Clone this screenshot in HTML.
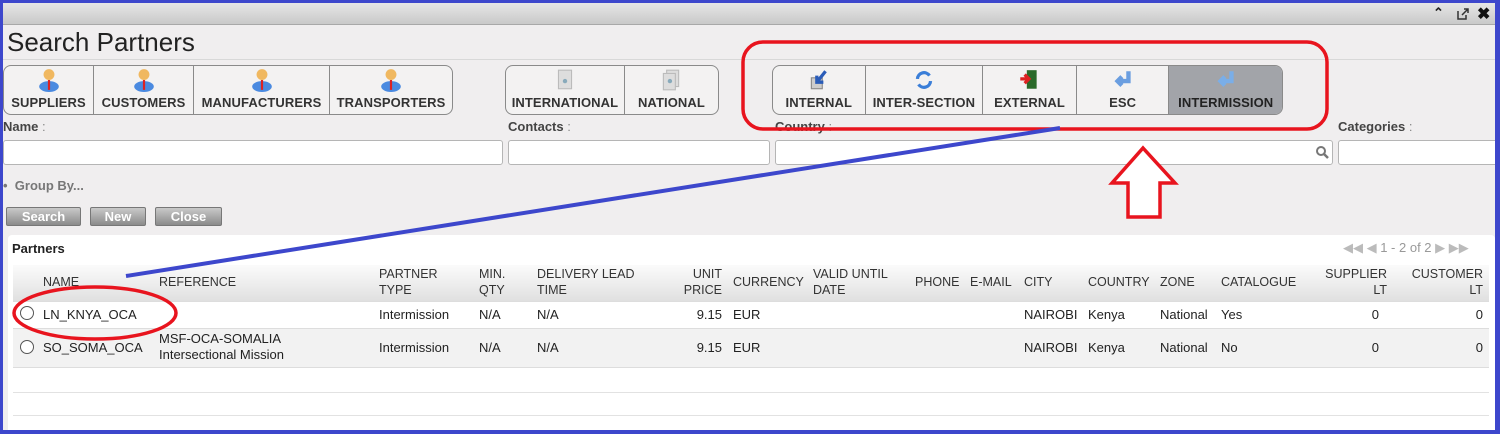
<!DOCTYPE html>
<html><head><meta charset="utf-8"><style>
*{margin:0;padding:0;box-sizing:border-box}
body{width:1500px;height:434px;overflow:hidden;background:#3d47cc;font-family:"Liberation Sans",Arial,sans-serif;position:relative}
.a{position:absolute}
#main{position:absolute;left:3px;top:3px;width:1492px;height:427px;background:#f0eeef;overflow:hidden}
.grp{position:absolute;top:62px;height:50px;border:1px solid #8a8a8a;border-radius:8px;background:#f3f2f2;display:flex;overflow:hidden}
.grp div{border-right:1px solid #8a8a8a;display:flex;flex-direction:column;align-items:center;justify-content:flex-end;padding-bottom:4px;font-weight:bold;font-size:13px;color:#333;letter-spacing:0.1px}
.grp div:last-child{border-right:none}
.ic{width:22px;height:24px;margin-bottom:3px}
.lbl{position:absolute;top:116px;font-size:13px;font-weight:bold;color:#444}
.lbl span{font-weight:normal;color:#888}
.inp{position:absolute;top:137px;height:25px;background:#fff;border:1px solid #b5b5b5;border-radius:3px}
.btn{position:absolute;top:204px;height:19px;border:1px solid #777;border-radius:2px;background:linear-gradient(#c9c9c9,#8b8b8b);color:#fff;font-weight:bold;font-size:13px;text-align:center;line-height:17px}
.t{position:absolute;font-size:13px;color:#222;white-space:nowrap;line-height:16px}
.h{position:absolute;font-size:12.5px;color:#333;white-space:nowrap;line-height:16px}
.r{text-align:right}
</style></head><body>
<div id="main">
 <div class="a" style="left:0;top:0;width:1492px;height:22px;background:linear-gradient(#e6e6e6,#c9c9c9);border-bottom:1px solid #a8a8a8"></div>
 <div class="a" style="left:1430px;top:2px;font-size:13px;font-weight:bold;color:#222">&#8963;</div>
 <svg class="a" style="left:1454px;top:5px" width="12" height="12"><path d="M1 3v8h8V7" fill="none" stroke="#333" stroke-width="1.5"/><path d="M5 7L11 1M7 1h4v4" fill="none" stroke="#333" stroke-width="1.5"/></svg>
 <div class="a" style="left:1474px;top:1px;font-size:16px;font-weight:bold;color:#111">&#10006;</div>
 <div class="a" style="left:4px;top:24px;font-size:26px;color:#222">Search Partners</div>
 <div class="a" style="left:0;top:56px;width:1492px;height:1px;background:#d8d8d8"></div>

 <div class="grp" style="left:0;width:450px">
  <div style="width:90px"><svg class="ic" viewBox="0 0 20 22"><circle cx="10" cy="6" r="5" fill="#f0b860"/><ellipse cx="10" cy="17" rx="9" ry="5" fill="#4a8ae0"/><path d="M10 11v9" stroke="#d22" stroke-width="2"/></svg>SUPPLIERS</div>
  <div style="width:100px"><svg class="ic" viewBox="0 0 20 22"><circle cx="10" cy="6" r="5" fill="#f0b860"/><ellipse cx="10" cy="17" rx="9" ry="5" fill="#4a8ae0"/><path d="M10 11v9" stroke="#d22" stroke-width="2"/></svg>CUSTOMERS</div>
  <div style="width:136px"><svg class="ic" viewBox="0 0 20 22"><circle cx="10" cy="6" r="5" fill="#f0b860"/><ellipse cx="10" cy="17" rx="9" ry="5" fill="#4a8ae0"/><path d="M10 11v9" stroke="#d22" stroke-width="2"/></svg>MANUFACTURERS</div>
  <div style="width:122px"><svg class="ic" viewBox="0 0 20 22"><circle cx="10" cy="6" r="5" fill="#f0b860"/><ellipse cx="10" cy="17" rx="9" ry="5" fill="#4a8ae0"/><path d="M10 11v9" stroke="#d22" stroke-width="2"/></svg>TRANSPORTERS</div>
 </div>
 <div class="grp" style="left:502px;width:214px">
  <div style="width:120px"><svg class="ic" viewBox="0 0 20 22"><rect x="4" y="2" width="12" height="17" fill="#ddd" stroke="#bbb"/><circle cx="10" cy="12" r="2" fill="#8ab"/></svg>INTERNATIONAL</div>
  <div style="width:94px"><svg class="ic" viewBox="0 0 20 22"><rect x="6" y="2" width="11" height="15" fill="#ddd" stroke="#bbb"/><rect x="3" y="5" width="11" height="15" fill="#ddd" stroke="#bbb"/><circle cx="9" cy="12" r="2" fill="#8ab"/></svg>NATIONAL</div>
 </div>
 <div class="grp" style="left:769px;width:511px">
  <div style="width:93px"><svg class="ic" viewBox="0 0 20 22"><rect x="3" y="9" width="10" height="10" fill="#ccc" stroke="#888"/><path d="M16 3L8 13M8 7v6h6" stroke="#2a5cb8" stroke-width="3" fill="none"/></svg>INTERNAL</div>
  <div style="width:118px"><svg class="ic" viewBox="0 0 20 22"><path d="M4 10a6 6 0 0 1 11-3M16 12a6 6 0 0 1-11 3" stroke="#3a7ed8" stroke-width="3" fill="none"/></svg>INTER-SECTION</div>
  <div style="width:94px"><svg class="ic" viewBox="0 0 20 22"><rect x="8" y="2" width="9" height="17" fill="#2a6a2a"/><path d="M2 10h7M6 6l4 4-4 4" stroke="#d22" stroke-width="3" fill="none"/></svg>EXTERNAL</div>
  <div style="width:93px"><svg class="ic" viewBox="0 0 20 22"><path d="M15 3v9H6M9 8l-4 4 4 4" stroke="#6a9ee0" stroke-width="4" fill="none"/></svg>ESC</div>
  <div style="width:113px;background:#a2a4a9;color:#222"><svg class="ic" viewBox="0 0 20 22"><path d="M15 3v9H6M9 8l-4 4 4 4" stroke="#7aaee8" stroke-width="4" fill="none"/></svg>INTERMISSION</div>
 </div>

 <div class="lbl" style="left:0">Name <span>:</span></div>
 <div class="lbl" style="left:505px">Contacts <span>:</span></div>
 <div class="lbl" style="left:772px">Country <span>:</span></div>
 <div class="lbl" style="left:1335px">Categories <span>:</span></div>
 <div class="inp" style="left:0;width:500px"></div>
 <div class="inp" style="left:505px;width:262px"></div>
 <div class="inp" style="left:772px;width:558px"></div>
 <svg class="a" style="left:1313px;top:143px" width="13" height="13"><circle cx="5" cy="5" r="4" fill="none" stroke="#777" stroke-width="2"/><path d="M8 8l4 4" stroke="#777" stroke-width="2.5"/></svg>
 <div class="inp" style="left:1335px;width:170px"></div>
 <div class="a" style="left:0;top:175px;font-size:13px;font-weight:bold;color:#777">&#8226;&nbsp; Group By...</div>
 <div class="btn" style="left:3px;width:75px">Search</div>
 <div class="btn" style="left:87px;width:56px">New</div>
 <div class="btn" style="left:152px;width:67px">Close</div>

 <div class="a" style="left:5px;top:232px;width:1487px;height:200px;background:#fff;border-radius:4px"></div>
 <div class="a" style="left:9px;top:238px;font-size:13px;font-weight:bold;color:#222">Partners</div>
 <div class="a" style="left:1340px;top:237px;font-size:13px;color:#bbb">&#9664;&#9664; &#9664; <span style="color:#999">1 - 2 of 2</span> &#9654; &#9654;&#9654;</div>
 <div class="a" style="left:10px;top:262px;width:1476px;height:36px;background:linear-gradient(#fbfbfb,#e0e0e0)"></div>
 <div class="a" style="left:10px;top:298px;width:1476px;height:1px;background:#ddd"></div>
 <div class="a" style="left:10px;top:325px;width:1476px;height:40px;background:#f2f2f2;border-top:1px solid #ddd;border-bottom:1px solid #ddd"></div>
 <div class="a" style="left:10px;top:389px;width:1476px;height:1px;background:#e2e2e2"></div>
 <div class="a" style="left:10px;top:412px;width:1476px;height:1px;background:#e2e2e2"></div>

 <div class="h" style="left:40px;top:271px">NAME</div>
 <div class="h" style="left:156px;top:271px">REFERENCE</div>
 <div class="h" style="left:376px;top:263px">PARTNER<br>TYPE</div>
 <div class="h" style="left:476px;top:263px">MIN.<br>QTY</div>
 <div class="h" style="left:534px;top:263px">DELIVERY LEAD<br>TIME</div>
 <div class="h r" style="left:660px;width:59px;top:263px">UNIT<br>PRICE</div>
 <div class="h" style="left:730px;top:271px">CURRENCY</div>
 <div class="h" style="left:810px;top:263px">VALID UNTIL<br>DATE</div>
 <div class="h" style="left:912px;top:271px">PHONE</div>
 <div class="h" style="left:967px;top:271px">E-MAIL</div>
 <div class="h" style="left:1021px;top:271px">CITY</div>
 <div class="h" style="left:1085px;top:271px">COUNTRY</div>
 <div class="h" style="left:1157px;top:271px">ZONE</div>
 <div class="h" style="left:1218px;top:271px">CATALOGUE</div>
 <div class="h r" style="left:1300px;width:84px;top:263px">SUPPLIER<br>LT</div>
 <div class="h r" style="left:1390px;width:90px;top:263px">CUSTOMER<br>LT</div>

 <div class="a" style="left:17px;top:303px;width:14px;height:14px;border:1px solid #555;border-radius:50%;background:#fff"></div>
 <div class="a" style="left:17px;top:337px;width:14px;height:14px;border:1px solid #555;border-radius:50%;background:#fff"></div>
 <div class="t" style="left:40px;top:304px">LN_KNYA_OCA</div>
 <div class="t" style="left:376px;top:304px">Intermission</div>
 <div class="t" style="left:476px;top:304px">N/A</div>
 <div class="t" style="left:534px;top:304px">N/A</div>
 <div class="t r" style="left:660px;width:59px;top:304px">9.15</div>
 <div class="t" style="left:730px;top:304px">EUR</div>
 <div class="t" style="left:1021px;top:304px">NAIROBI</div>
 <div class="t" style="left:1085px;top:304px">Kenya</div>
 <div class="t" style="left:1157px;top:304px">National</div>
 <div class="t" style="left:1218px;top:304px">Yes</div>
 <div class="t r" style="left:1300px;width:76px;top:304px">0</div>
 <div class="t r" style="left:1390px;width:90px;top:304px">0</div>

 <div class="t" style="left:40px;top:337px">SO_SOMA_OCA</div>
 <div class="t" style="left:156px;top:328px">MSF-OCA-SOMALIA<br>Intersectional Mission</div>
 <div class="t" style="left:376px;top:337px">Intermission</div>
 <div class="t" style="left:476px;top:337px">N/A</div>
 <div class="t" style="left:534px;top:337px">N/A</div>
 <div class="t r" style="left:660px;width:59px;top:337px">9.15</div>
 <div class="t" style="left:730px;top:337px">EUR</div>
 <div class="t" style="left:1021px;top:337px">NAIROBI</div>
 <div class="t" style="left:1085px;top:337px">Kenya</div>
 <div class="t" style="left:1157px;top:337px">National</div>
 <div class="t" style="left:1218px;top:337px">No</div>
 <div class="t r" style="left:1300px;width:76px;top:337px">0</div>
 <div class="t r" style="left:1390px;width:90px;top:337px">0</div>
</div>
<svg class="a" style="left:0;top:0" width="1500" height="434">
 <rect x="743" y="42" width="584" height="87" rx="20" fill="none" stroke="#e8141e" stroke-width="3.5"/>
 <ellipse cx="95" cy="313" rx="81" ry="26" fill="none" stroke="#e8141e" stroke-width="3.5"/>
 <path d="M1143 148L1175 183H1160V217H1128V183H1112Z" fill="#fff" stroke="#e8141e" stroke-width="3.5" stroke-linejoin="miter"/>
 <path d="M126 276L1060 128" stroke="#3d47cc" stroke-width="4"/>
</svg>
</body></html>
